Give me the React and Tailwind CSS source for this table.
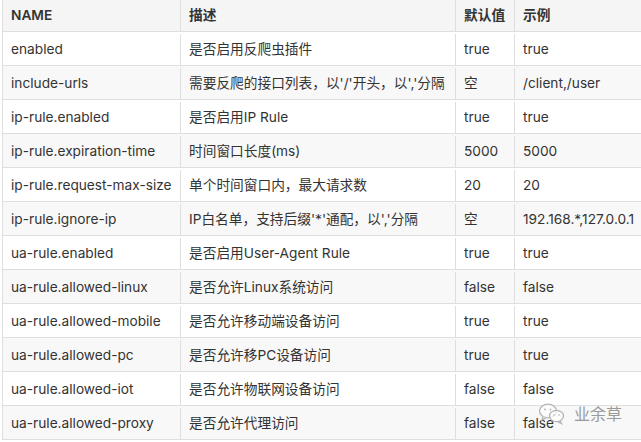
import React from 'react';

const rows = [
  ['enabled', '是否启用反爬虫插件', 'true', 'true'],
  ['include-urls', "需要反爬的接口列表，以'/'开头，以','分隔", '空', '/client,/user'],
  ['ip-rule.enabled', '是否启用IP Rule', 'true', 'true'],
  ['ip-rule.expiration-time', '时间窗口长度(ms)', '5000', '5000'],
  ['ip-rule.request-max-size', '单个时间窗口内，最大请求数', '20', '20'],
  ['ip-rule.ignore-ip', "IP白名单，支持后缀'*'通配，以','分隔", '空', '192.168.*,127.0.0.1'],
  ['ua-rule.enabled', '是否启用User-Agent Rule', 'true', 'true'],
  ['ua-rule.allowed-linux', '是否允许Linux系统访问', 'false', 'false'],
  ['ua-rule.allowed-mobile', '是否允许移动端设备访问', 'true', 'true'],
  ['ua-rule.allowed-pc', '是否允许移PC设备访问', 'true', 'true'],
  ['ua-rule.allowed-iot', '是否允许物联网设备访问', 'false', 'false'],
  ['ua-rule.allowed-proxy', '是否允许代理访问', 'false', 'false'],
];

const Row = ({ cells, header, striped }) => (
  <div
    className={`flex border-b border-[#dedede] ${header ? 'h-[32px] bg-[#f5f5f5] font-semibold text-[#333]' : 'h-[34px] pt-[2px]'} ${
      striped ? 'bg-[#f8f8f8]' : ''
    }`}
  >
    <div className="w-[178px] shrink-0 border-r border-[#dedede] px-2 flex items-center whitespace-nowrap">{cells[0]}</div>
    <div className="w-[275px] shrink-0 border-r border-[#dedede] px-2 flex items-center whitespace-nowrap">{cells[1]}</div>
    <div className="w-[59px] shrink-0 border-r border-[#dedede] px-2 flex items-center whitespace-nowrap">{cells[2]}</div>
    <div className="flex-1 px-2 flex items-center whitespace-nowrap">{cells[3]}</div>
  </div>
);

const WeChatIcon = () => (
  <svg width="28" height="22" viewBox="0 0 28 22" fill="none" stroke="#b5b5b5" strokeWidth="1.3">
    <ellipse cx="10" cy="8" rx="8.5" ry="6.8" fill="rgba(255,255,255,0.6)" />
    <path d="M5 13.5 L4 17 L8 14.6" fill="rgba(255,255,255,0.6)" />
    <ellipse cx="18.5" cy="13" rx="7" ry="5.6" fill="rgba(255,255,255,0.7)" />
    <path d="M22 18 L23.5 20.5 L19.5 18.6" />
    <circle cx="7" cy="6.5" r="0.9" fill="#b5b5b5" stroke="none" />
    <circle cx="12.5" cy="6.5" r="0.9" fill="#b5b5b5" stroke="none" />
    <circle cx="16" cy="12" r="0.8" fill="#b5b5b5" stroke="none" />
    <circle cx="21" cy="12" r="0.8" fill="#b5b5b5" stroke="none" />
  </svg>
);

export default function App() {
  return (
    <div
      className="relative w-[641px] h-[442px] overflow-hidden bg-white text-[13.7px] text-[#333]"
      style={{ fontFamily: '"Inter", "Noto Sans CJK SC", sans-serif' }}
    >
      <div className="ml-[2px] border-l border-[#dedede]">
        <Row header cells={['NAME', '描述', '默认值', '示例']} />
        {rows.map((r, i) => (
          <Row key={i} cells={r} striped={i % 2 === 1} />
        ))}
      </div>
      <div className="absolute left-[538px] top-[402px] flex items-center gap-2">
        <WeChatIcon />
        <span className="text-[16px] text-[#9a9a9a]">业余草</span>
      </div>
    </div>
  );
}
